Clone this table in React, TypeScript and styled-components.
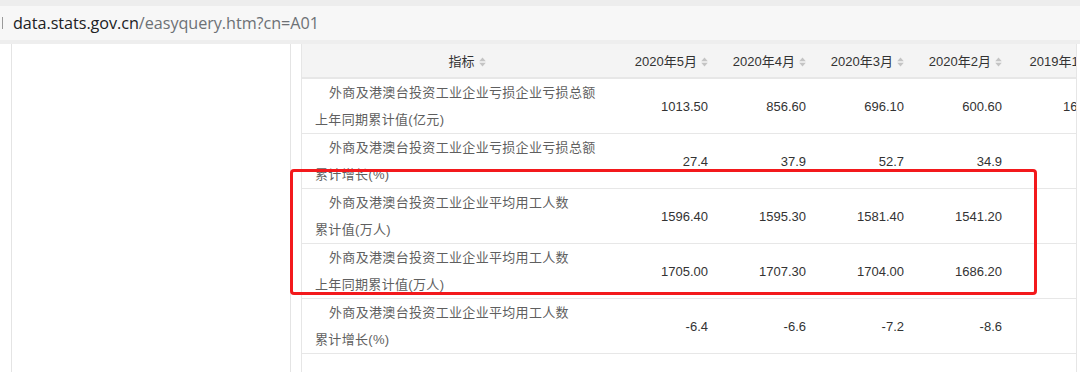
import styled, { createGlobalStyle } from 'styled-components';

const GlobalStyle = createGlobalStyle`
  html, body {
    margin: 0;
    padding: 0;
    background: #ffffff;
    font-family: "Liberation Sans", "Noto Sans CJK SC", sans-serif;
  }
  #root {
    width: 1080px;
    height: 372px;
    overflow: hidden;
  }
`;

const BrowserBar = styled.div`
  height: 44px;
  box-sizing: border-box;
  background: #ededed;
  padding-top: 6px;
  border-bottom: 4px solid #eeeeee;
`;

const AddressField = styled.div`
  height: 34px;
  background: #f7f7f7;
  display: flex;
  align-items: center;
  gap: 10px;
  padding-left: 2px;
  font-family: "Open Sans", "Noto Sans", sans-serif;
  font-size: 16.2px;
  letter-spacing: -0.05px;
`;

const Caret = styled.span`
  width: 1px;
  height: 12px;
  background: #9a9a9a;
`;

const UrlHost = styled.span`
  color: #202124;
`;

const UrlPath = styled.span`
  color: #6d7175;
`;

const Main = styled.div`
  position: relative;
  display: flex;
  height: 328px;
`;

const Sidebar = styled.aside`
  margin-left: 11px;
  width: 278px;
  border-left: 1px solid #e4e4e4;
  border-right: 1px solid #e4e4e4;
  background: #ffffff;
`;

const TableWrap = styled.div`
  margin-left: 10px;
  width: 774px;
  border-left: 1px solid #e6e6e6;
  border-right: 1px solid #e6e6e6;
  overflow: hidden;
`;

const DataTable = styled.table`
  table-layout: fixed;
  border-collapse: collapse;
  width: 816px;
  font-size: 13px;
`;

const HeadCell = styled.th<{ $align: 'center' | 'right'; $width: number }>`
  width: ${p => p.$width}px;
  height: 34px;
  padding: 0 8px 0 0;
  box-sizing: border-box;
  background: #f4f4f4;
  border-bottom: 2px solid #e7e7e7;
  color: #333333;
  font-weight: normal;
  text-align: ${p => p.$align};
  white-space: nowrap;
  ${p => p.$align === 'center' && 'padding: 0 0 0 14px;'}
`;

const SortIcon = styled.svg`
  margin-left: 4px;
  vertical-align: -1px;
`;

const Row = styled.tr`
  border-bottom: 1px solid #e7e7e7;
`;

const LabelCell = styled.td`
  height: 54px;
  padding: 0 0 0 13px;
  line-height: 27px;
  color: #5f5f5f;
  letter-spacing: 0.33px;
  vertical-align: top;
  white-space: nowrap;
`;

const LabelName = styled.div`
  text-indent: 14px;
`;

const ValueCell = styled.td`
  padding: 0 8px 0 0;
  text-align: right;
  color: #333333;
  vertical-align: middle;
  white-space: nowrap;
`;

const Highlight = styled.div`
  position: absolute;
  left: 290px;
  top: 125px;
  width: 747px;
  height: 126px;
  box-sizing: border-box;
  border: 3px solid #f3191c;
  border-radius: 4px;
  pointer-events: none;
`;

const Sort = () => (
  <SortIcon width="7" height="10" viewBox="0 0 7 10">
    <path d="M3.5 0.5 L6.8 4.2 L0.2 4.2 Z" fill="#c4c4c4" />
    <path d="M3.5 9.5 L6.8 5.8 L0.2 5.8 Z" fill="#c4c4c4" />
  </SortIcon>
);

const months = ['2020年5月', '2020年4月', '2020年3月', '2020年2月', '2019年12月'];

interface Indicator {
  name: string;
  unit: string;
  values: string[];
}

const rows: Indicator[] = [
  {
    name: '外商及港澳台投资工业企业亏损企业亏损总额',
    unit: '上年同期累计值(亿元)',
    values: ['1013.50', '856.60', '696.10', '600.60', '1674.80']
  },
  {
    name: '外商及港澳台投资工业企业亏损企业亏损总额',
    unit: '累计增长(%)',
    values: ['27.4', '37.9', '52.7', '34.9', '']
  },
  {
    name: '外商及港澳台投资工业企业平均用工人数',
    unit: '累计值(万人)',
    values: ['1596.40', '1595.30', '1581.40', '1541.20', '']
  },
  {
    name: '外商及港澳台投资工业企业平均用工人数',
    unit: '上年同期累计值(万人)',
    values: ['1705.00', '1707.30', '1704.00', '1686.20', '']
  },
  {
    name: '外商及港澳台投资工业企业平均用工人数',
    unit: '累计增长(%)',
    values: ['-6.4', '-6.6', '-7.2', '-8.6', '']
  }
];

const App = () => {
  return (
    <>
      <GlobalStyle />
      <BrowserBar>
        <AddressField>
          <Caret />
          <span>
            <UrlHost>data.stats.gov.cn</UrlHost>
            <UrlPath>/easyquery.htm?cn=A01</UrlPath>
          </span>
        </AddressField>
      </BrowserBar>
      <Main>
        <Sidebar />
        <TableWrap>
          <DataTable>
            <thead>
              <tr>
                <HeadCell $align="center" $width={316}>
                  指标<Sort />
                </HeadCell>
                {months.map((m, i) => (
                  <HeadCell key={m} $align="right" $width={i === 4 ? 108 : 98}>
                    {m}<Sort />
                  </HeadCell>
                ))}
              </tr>
            </thead>
            <tbody>
              {rows.map((r, i) => (
                <Row key={i}>
                  <LabelCell>
                    <LabelName>{r.name}</LabelName>
                    <div>{r.unit}</div>
                  </LabelCell>
                  {r.values.map((v, j) => (
                    <ValueCell key={j}>{v}</ValueCell>
                  ))}
                </Row>
              ))}
            </tbody>
          </DataTable>
        </TableWrap>
        <Highlight />
      </Main>
    </>
  );
};

export default App;
